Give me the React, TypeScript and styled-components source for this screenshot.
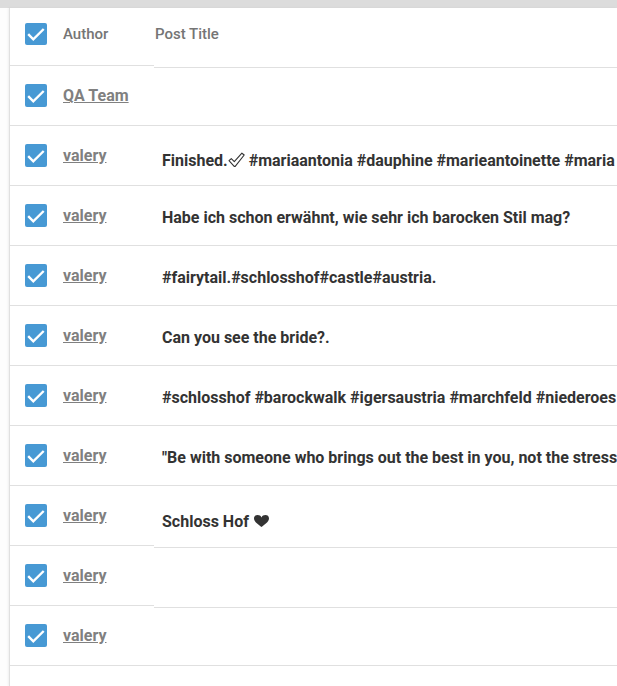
import React from "react";
import styled, { createGlobalStyle } from "styled-components";

const Global = createGlobalStyle`
  *, *::before, *::after { box-sizing: border-box; }
  body {
    margin: 0;
    background: #fdfdfd;
    font-family: Roboto, "Liberation Sans", sans-serif;
  }
`;

const Screen = styled.main`
  display: flex;
  flex-direction: column;
  height: 100vh;
  overflow: hidden;
`;

const TopBar = styled.div`
  flex: none;
  height: 8px;
  background: #dcdcdc;
`;

const Sheet = styled.div`
  flex: 1;
  display: flex;
  align-items: flex-start;
  margin-left: 9px;
  border-left: 1px solid #e0e0e0;
  background: #fff;
  box-shadow: -1px 0 2px rgba(0, 0, 0, 0.06);
  overflow: hidden;
`;

const Pinned = styled.table`
  flex: none;
  width: 144px;
  border-collapse: separate;
  border-spacing: 0;
`;

const Scrolling = styled.table`
  flex: 1;
  min-width: 0;
  border-collapse: separate;
  border-spacing: 0;
`;

const Row = styled.tr<{ $height: number }>`
  height: ${(p) => p.$height}px;
`;

const line = `
  border-bottom: 1px solid #e0e0e0;
  text-align: left;
  vertical-align: middle;
  white-space: nowrap;
`;

const HeadCell = styled.th`
  ${line}
  padding: 0 0 5px;
  color: #757575;
  font-size: 15px;
  font-weight: 500;
`;

const TitleHead = styled(HeadCell)`
  padding: 0 0 7px 1px;
`;

const CheckHead = styled(HeadCell)`
  width: 53px;
  padding-left: 15px;
`;

const CheckCell = styled.td`
  ${line}
  width: 53px;
  padding: 0 0 0 15px;
`;

const AuthorCell = styled.td`
  ${line}
  padding: 0;
`;

const TitleCell = styled.td<{ $low?: boolean }>`
  ${line}
  padding: ${(p) => (p.$low ? 10 : 4)}px 0 0 8px;
  color: #333;
  font-size: 16px;
  font-weight: 700;
  line-height: 20px;
`;

const CheckLabel = styled.label`
  display: grid;
  width: 22px;
`;

const Input = styled.input`
  grid-area: 1 / 1;
  appearance: none;
  width: 22px;
  height: 22px;
  margin: 0;
  border-radius: 2px;
  background: #4799d4;

  tbody & {
    height: 23px;
  }

  &:not(:checked) {
    background: #fff;
    border: 2px solid #757575;
  }

  &:not(:checked) + svg {
    visibility: hidden;
  }
`;

const Tick = styled.svg`
  grid-area: 1 / 1;
  align-self: center;
  width: 22px;
  height: 22px;
  pointer-events: none;
`;

const Author = styled.a`
  color: #808080;
  font-size: 16px;
  font-weight: 700;
`;

const Glyph = styled.svg`
  width: 17px;
  height: 16px;
  vertical-align: -2px;
`;

const Check = ({ name }: { name: string }) => (
  <CheckLabel>
    <Input type="checkbox" defaultChecked aria-label={name} />
    <Tick viewBox="0 0 22 22" aria-hidden="true">
      <path d="M3.2 11.2 8.3 16.3 18.7 6" fill="none" stroke="#fff" strokeWidth="2.4" />
    </Tick>
  </CheckLabel>
);

const OutlineCheck = () => (
  <Glyph viewBox="0 0 17 16" aria-hidden="true">
    <path
      d="M1 8.6 3.3 6.6 6.3 9.6 13.9 1.2 16.2 3 7.2 14.4H6.2Z"
      fill="none"
      stroke="#333"
      strokeWidth="1.1"
      strokeLinejoin="round"
    />
  </Glyph>
);

const Heart = () => (
  <Glyph viewBox="0 0 17 16" aria-hidden="true">
    <path
      d="M8.5 14C6 11.8 1 9 1 5.4 1 3.2 2.6 2 4.6 2 6.4 2 7.8 2.8 8.5 4.4 9.2 2.8 10.6 2 12.4 2 14.4 2 16 3.2 16 5.4 16 9 11 11.8 8.5 14Z"
      fill="#333"
    />
  </Glyph>
);

type Post = { author: string; title?: React.ReactNode; height: number; low?: boolean };

const posts: Post[] = [
  { author: "QA Team", height: 58 },
  {
    author: "valery",
    title: <>Finished.<OutlineCheck /> #mariaantonia #dauphine #marieantoinette #maria</>,
    height: 60,
    low: true,
  },
  { author: "valery", title: "Habe ich schon erwähnt, wie sehr ich barocken Stil mag?", height: 60 },
  { author: "valery", title: "#fairytail.#schlosshof#castle#austria.", height: 60 },
  { author: "valery", title: "Can you see the bride?.", height: 60 },
  {
    author: "valery",
    title: "#schlosshof #barockwalk #igersaustria #marchfeld #niederoes",
    height: 60,
  },
  {
    author: "valery",
    title: "\"Be with someone who brings out the best in you, not the stress",
    height: 60,
  },
  { author: "valery", title: <>Schloss Hof <Heart /></>, height: 62, low: true },
  { author: "valery", height: 60 },
  { author: "valery", height: 58 },
];

const App = () => (
  <Screen>
    <Global />
    <TopBar />
    <Sheet>
      <Pinned>
        <thead>
          <Row $height={58}>
            <CheckHead><Check name="Select all posts" /></CheckHead>
            <HeadCell>Author</HeadCell>
          </Row>
        </thead>
        <tbody>
          {posts.map((post, i) => (
            <Row key={i} $height={60}>
              <CheckCell><Check name={`Select post ${i + 1}`} /></CheckCell>
              <AuthorCell><Author href="#">{post.author}</Author></AuthorCell>
            </Row>
          ))}
        </tbody>
      </Pinned>
      <Scrolling>
        <thead>
          <Row $height={60}>
            <TitleHead>Post Title</TitleHead>
          </Row>
        </thead>
        <tbody>
          {posts.map((post, i) => (
            <Row key={i} $height={post.height}>
              <TitleCell $low={post.low}>{post.title}</TitleCell>
            </Row>
          ))}
        </tbody>
      </Scrolling>
    </Sheet>
  </Screen>
);

export default App;
